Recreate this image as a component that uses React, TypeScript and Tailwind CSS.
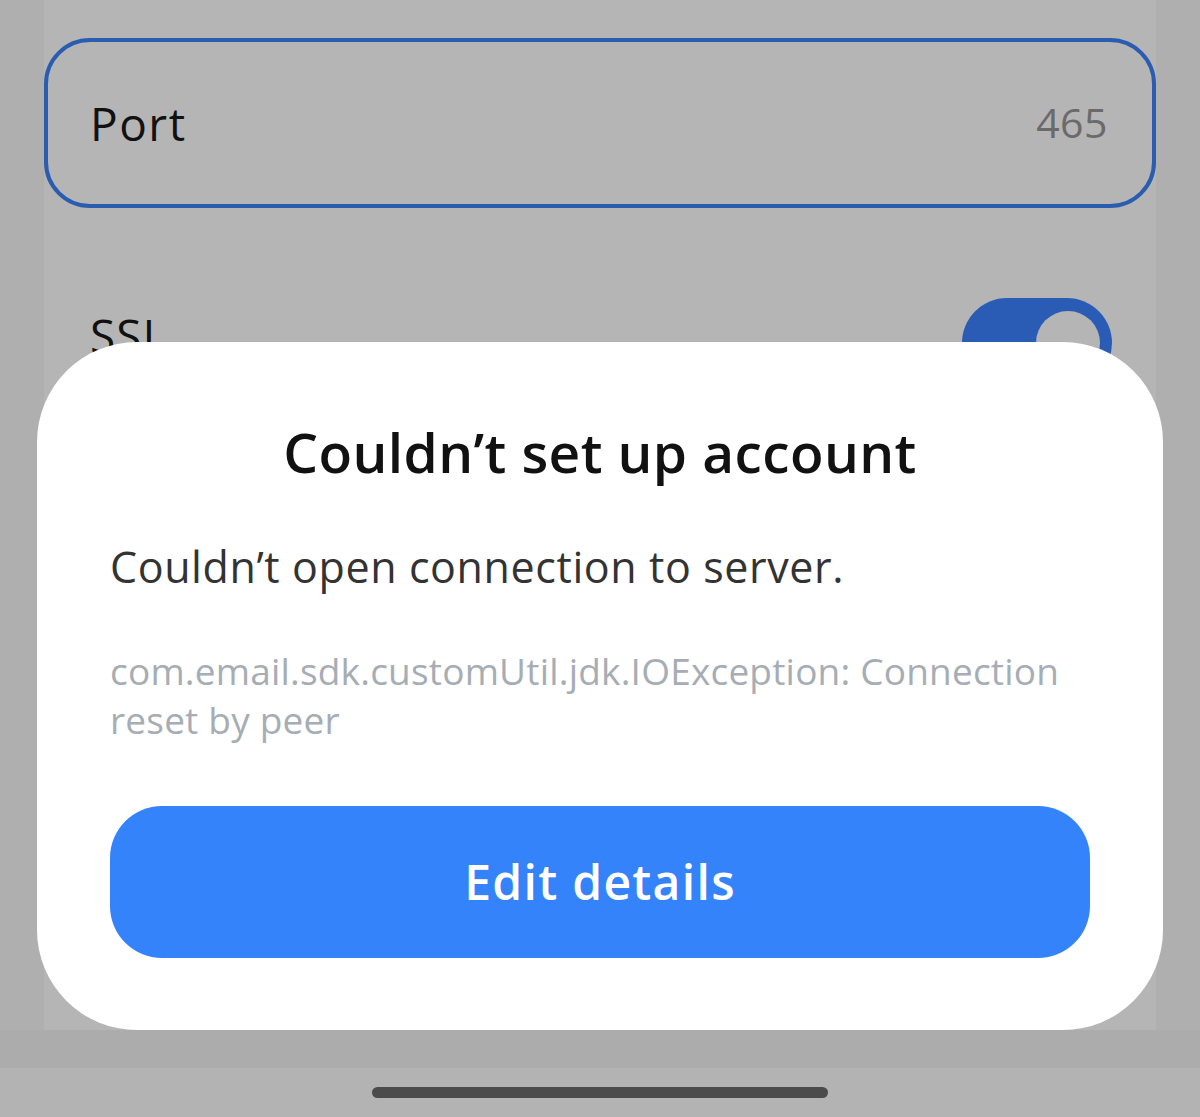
export default function App() {
  return (
    <div
      className="relative flex h-[1117px] w-[1200px] flex-col overflow-hidden bg-[#afafaf]"
      style={{ fontFamily: "'Open Sans', 'Noto Sans', sans-serif" }}
    >
      {/* Settings page behind the dim */}
      <div className="mx-[44px] flex-1 bg-[#b5b5b5] pt-[38px]">
        <div className="flex h-[170px] items-center justify-between rounded-[46px] border-[4px] border-[#2a5cb0] pl-[42px] pr-[44px]">
          <span className="text-[46px] tracking-[1.5px] text-[#111]">Port</span>
          <span className="text-[41px] tracking-[0.5px] text-[#6a6a6a]">465</span>
        </div>

        <div className="mt-[90px] flex items-start justify-between pl-[46px] pr-[44px]">
          <span className="pt-[14px] text-[46px] leading-none tracking-[1px] text-[#111]">SSL</span>
          <div className="flex h-[90px] w-[150px] items-center justify-end rounded-full bg-[#2a5cb5] pr-[12px]">
            <div className="h-[64px] w-[64px] rounded-full bg-[#b5b5b5]" />
          </div>
        </div>
      </div>

      {/* Strip above nav */}
      <div className="h-[38px] bg-[#acacac]" />

      {/* Nav bar */}
      <div className="flex h-[49px] items-center justify-center bg-[#b3b3b3]">
        <div className="h-[11px] w-[456px] rounded-full bg-[#4b4b4b]" />
      </div>

      {/* Bottom sheet dialog */}
      <div className="absolute left-[37px] top-[342px] flex h-[688px] w-[1126px] flex-col rounded-t-[100px] rounded-b-[100px] bg-white px-[73px] pt-[75px]">
        <h1 className="text-center text-[55px] font-semibold leading-[70px] tracking-[0.4px] text-[#111]">
          Couldn&rsquo;t set up account
        </h1>
        <p className="mt-[55px] text-[43px] leading-[50px] tracking-[0.6px] text-[#333]">
          Couldn&rsquo;t open connection to server.
        </p>
        <p className="mt-[54px] pr-[20px] text-[37px] leading-[49px] tracking-[0.2px] text-[#a6adb5]">
          com.email.sdk.customUtil.jdk.IOException: Connection reset by peer
        </p>
        <button
          type="button"
          className="mt-[62px] flex h-[152px] w-full shrink-0 items-center justify-center rounded-[52px] bg-[#3483fb] text-[48px] font-semibold tracking-[1.3px] text-white"
        >
          Edit details
        </button>
      </div>
    </div>
  );
}
